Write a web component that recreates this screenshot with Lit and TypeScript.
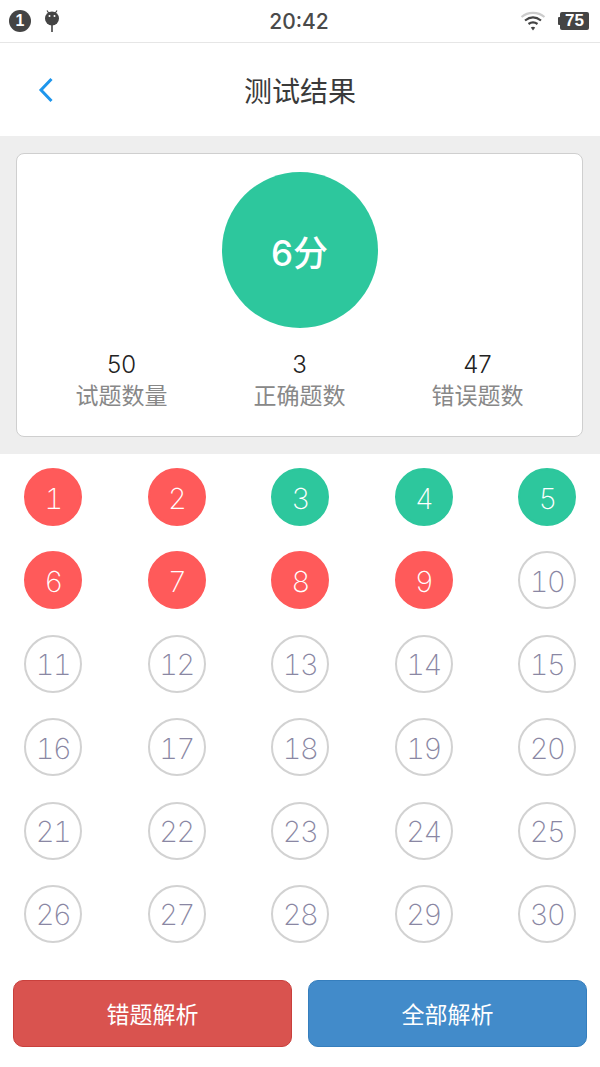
import { LitElement, html, css } from "lit";
import { customElement } from "lit/decorators.js";
import { classMap } from "lit/directives/class-map.js";

const RED = new Set([1, 2, 6, 7, 8, 9]);
const GREEN = new Set([3, 4, 5]);

@customElement("app-root")
export class AppRoot extends LitElement {
  static styles = css`
    :host {
      display: block;
      width: 600px;
      height: 1067px;
      background: #fff;
      overflow: hidden;
      font-family: "Inter", "Noto Sans CJK SC", sans-serif;
      color: #333;
    }
    .status {
      height: 42px;
      border-bottom: 1px solid #e6e6e6;
      display: grid;
      grid-template-columns: 1fr auto 1fr;
      align-items: center;
      padding: 0 11px 0 9px;
      background: #fff;
    }
    .status-left { display: flex; align-items: center; gap: 13px; }
    .status-right { display: flex; align-items: center; justify-content: flex-end; gap: 12px; }
    .badge {
      width: 22px;
      height: 22px;
      border-radius: 50%;
      background: #444;
      color: #fff;
      font: 700 16px "Liberation Sans", sans-serif;
      display: flex;
      align-items: center;
      justify-content: center;
    }
    .time {
      font: 500 21px "Inter", sans-serif;
      color: #4a4a4a;
    }
    .battery { display: flex; align-items: center; }
    .battery-tip { width: 2px; height: 8px; background: #444; border-radius: 1px 0 0 1px; }
    .battery-body {
      width: 29px;
      height: 18px;
      background: #444;
      border-radius: 2px;
      color: #fff;
      font: 700 17px "Liberation Sans", sans-serif;
      display: flex;
      align-items: center;
      justify-content: center;
    }
    .nav {
      height: 93px;
      display: flex;
      align-items: center;
      justify-content: center;
      position: relative;
      background: #fff;
    }
    .back { position: absolute; left: 38px; top: 34px; }
    .title {
      font-size: 28px;
      font-family: "Noto Sans CJK SC", sans-serif;
      font-weight: 400;
      color: #3a3a3a;
      line-height: 1;
    }
    .summary {
      background: #eeeeee;
      padding: 17px 17px 17px 16px;
      height: 318px;
      box-sizing: border-box;
    }
    .card {
      height: 284px;
      box-sizing: border-box;
      background: #fff;
      border: 1px solid #cfcfcf;
      border-radius: 8px;
      display: flex;
      flex-direction: column;
      align-items: center;
      padding-top: 18px;
    }
    .score {
      width: 156px;
      height: 156px;
      border-radius: 50%;
      background: #2dc79d;
      color: #fff;
      font-size: 35px;
      font-weight: 500;
      display: flex;
      align-items: center;
      justify-content: center;
    }
    .stats {
      display: grid;
      grid-template-columns: repeat(3, 178px);
      margin-top: 22px;
      text-align: center;
    }
    .stat-num { font-size: 24px; font-weight: 300; line-height: 30px; color: #222; }
    .stat-label { font-size: 23px; line-height: 32px; color: #888; font-weight: 400; }
    .grid {
      display: grid;
      grid-template-columns: repeat(5, 58px);
      justify-content: space-between;
      row-gap: 25.4px;
      padding: 14px 24px 0;
    }
    .q {
      width: 58px;
      height: 58px;
      box-sizing: border-box;
      border-radius: 50%;
      border: 2px solid #d2d2d2;
      color: #8a87a3;
      font-size: 29px;
      font-weight: 200;
      font-variant-numeric: tabular-nums;
      letter-spacing: -1.5px;
      padding-top: 2px;
      display: flex;
      align-items: center;
      justify-content: center;
    }
    .q.red { background: #ff5a5a; border-color: #ff5a5a; color: #fff; }
    .q.green { background: #2dc79d; border-color: #2dc79d; color: #fff; }
    .actions {
      display: grid;
      grid-template-columns: 279px 279px;
      column-gap: 16px;
      padding: 37px 13px 0;
    }
    .btn {
      height: 67px;
      box-sizing: border-box;
      border-radius: 10px;
      color: #fff;
      font-size: 23px;
      font-weight: 400;
      display: flex;
      align-items: center;
      justify-content: center;
    }
    .btn.danger { background: #d9534f; border: 1px solid #c9403c; }
    .btn.primary { background: #428bca; border: 1px solid #357ebd; }
  `;

  render() {
    const nums = Array.from({ length: 30 }, (_, i) => i + 1);
    return html`
      <div class="status">
        <div class="status-left">
          <div class="badge">1</div>
          <svg width="16" height="24" viewBox="0 0 16 24">
            <path d="M3 1.5 5 4.5M13 1.5 11 4.5" stroke="#444" stroke-width="1.2" />
            <circle cx="8" cy="9.5" r="7" fill="#444" />
            <circle cx="5.5" cy="7" r="1" fill="#fff" />
            <circle cx="10.5" cy="7" r="1" fill="#fff" />
            <rect x="7.2" y="16" width="1.6" height="7" fill="#444" />
          </svg>
        </div>
        <div class="time">20:42</div>
        <div class="status-right">
          <svg width="26" height="22" viewBox="0 0 26 22" fill="none">
            <path d="M1.5 7C8 1.5 18 1.5 24.5 7" stroke="#ccc" stroke-width="2.2" />
            <path d="M5 10.5C10 6.5 16 6.5 21 10.5" stroke="#444" stroke-width="2.2" />
            <path d="M8.5 14C11.5 11.8 14.5 11.8 17.5 14" stroke="#444" stroke-width="2.2" />
            <path d="M10.8 17.4 13 20.5 15.2 17.4C13.8 16.4 12.2 16.4 10.8 17.4Z" fill="#444" />
          </svg>
          <div class="battery">
            <div class="battery-tip"></div>
            <div class="battery-body">75</div>
          </div>
        </div>
      </div>
      <div class="nav">
        <svg class="back" width="16" height="26" viewBox="0 0 16 26" fill="none">
          <path d="M13.5 2 3 13 13.5 24" stroke="#1e96ec" stroke-width="3" />
        </svg>
        <div class="title">测试结果</div>
      </div>
      <div class="summary">
        <div class="card">
          <div class="score">6分</div>
          <div class="stats">
            <div><div class="stat-num">50</div><div class="stat-label">试题数量</div></div>
            <div><div class="stat-num">3</div><div class="stat-label">正确题数</div></div>
            <div><div class="stat-num">47</div><div class="stat-label">错误题数</div></div>
          </div>
        </div>
      </div>
      <div class="grid">
        ${nums.map(
          (n) => html`<div class=${classMap({ q: true, red: RED.has(n), green: GREEN.has(n) })}>${n}</div>`
        )}
      </div>
      <div class="actions">
        <div class="btn danger">错题解析</div>
        <div class="btn primary">全部解析</div>
      </div>
    `;
  }
}
